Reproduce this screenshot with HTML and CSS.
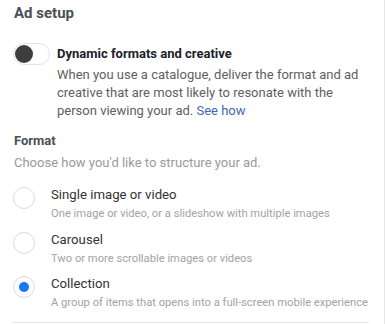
FILE: index.html
```html
<!DOCTYPE html>
<html lang="en">

<head>
    <meta charset="UTF-8">
    <title>Ad setup</title>
    <link rel="stylesheet" href="styles.css">
</head>

<body>
    <div class="panel">
        <h2 class="title">Ad setup</h2>

        <div class="dynamic">
            <span class="switch"><span class="knob"></span></span>
            <div class="dynamic-text">
                <div class="dynamic-label">Dynamic formats and creative</div>
                <p class="dynamic-desc">When you use a catalogue, deliver the format and ad creative that are most likely to resonate with the person viewing your ad. <a href="#">See how</a></p>
            </div>
        </div>

        <div class="format">
            <div class="format-label">Format</div>
            <div class="format-hint">Choose how you'd like to structure your ad.</div>

            <ul class="options">
                <li class="option">
                    <span class="radio"></span>
                    <div class="option-text">
                        <div class="option-name">Single image or video</div>
                        <div class="option-desc">One image or video, or a slideshow with multiple images</div>
                    </div>
                </li>
                <li class="option">
                    <span class="radio"></span>
                    <div class="option-text">
                        <div class="option-name">Carousel</div>
                        <div class="option-desc">Two or more scrollable images or videos</div>
                    </div>
                </li>
                <li class="option">
                    <span class="radio checked"></span>
                    <div class="option-text">
                        <div class="option-name">Collection</div>
                        <div class="option-desc">A group of items that opens into a full-screen mobile experience</div>
                    </div>
                </li>
            </ul>
        </div>
    </div>
</body>

</html>
```

FILE: styles.css
```css
* {
    margin: 0;
    padding: 0;
    box-sizing: border-box;
}

body {
    width: 385px;
    height: 324px;
    overflow: hidden;
    background: #fff;
    font-family: Roboto, "Liberation Sans", Arial, sans-serif;
    color: #444;
}

.panel {
    width: 385px;
    height: 324px;
    border-right: 1px solid #e6e6e6;
    padding: 3px 0 0 14px;
}

.title {
    font-size: 15px;
    font-weight: 700;
    color: #4b4f56;
    line-height: 20px;
}

.dynamic {
    display: flex;
    margin-top: 22px;
    margin-left: -1px;
}

.switch {
    flex: none;
    position: relative;
    width: 37px;
    height: 22px;
    border: 1px solid #e4e4e4;
    border-radius: 11px;
    background: #fff;
    margin-top: -2px;
}

.knob {
    position: absolute;
    left: 1px;
    top: 1px;
    width: 18px;
    height: 18px;
    border-radius: 50%;
    background: #3d3d3d;
}

.dynamic-text {
    margin-left: 7px;
}

.dynamic-label {
    font-size: 13px;
    font-weight: 700;
    color: #1d2129;
    line-height: 18px;
}

.dynamic-desc {
    font-size: 13px;
    line-height: 18px;
    color: #606060;
    width: 312px;
    margin-top: 3px;
}

.dynamic-desc a {
    color: #4267b2;
    text-decoration: none;
}

.format {
    margin-top: 12px;
}

.format-label {
    font-size: 13px;
    font-weight: 700;
    color: #4b4f56;
    line-height: 18px;
}

.format-hint {
    font-size: 13px;
    color: #9a9a9a;
    line-height: 18px;
    margin-top: 4px;
}

.options {
    list-style: none;
    margin-top: 15px;
    margin-left: -2px;
    width: 357px;
    padding-bottom: 1.5px;
    border-bottom: 1px solid #e6e6e6;
}

.option {
    display: flex;
    height: 44.5px;
}

.radio {
    flex: none;
    position: relative;
    width: 22px;
    height: 22px;
    margin-left: 1px;
    border: 1px solid #dcdcdc;
    border-radius: 50%;
}

.radio.checked::after {
    content: "";
    position: absolute;
    left: 5px;
    top: 5px;
    width: 10px;
    height: 10px;
    border-radius: 50%;
    background: #1877f2;
}

.option-text {
    margin-left: 16px;
    margin-top: -2px;
}

.option-name {
    font-size: 13.2px;
    color: #333;
    line-height: 20px;
}

.option-desc {
    font-size: 11.2px;
    color: #a3a3a3;
    line-height: 14px;
    margin-top: 2px;
}
```
